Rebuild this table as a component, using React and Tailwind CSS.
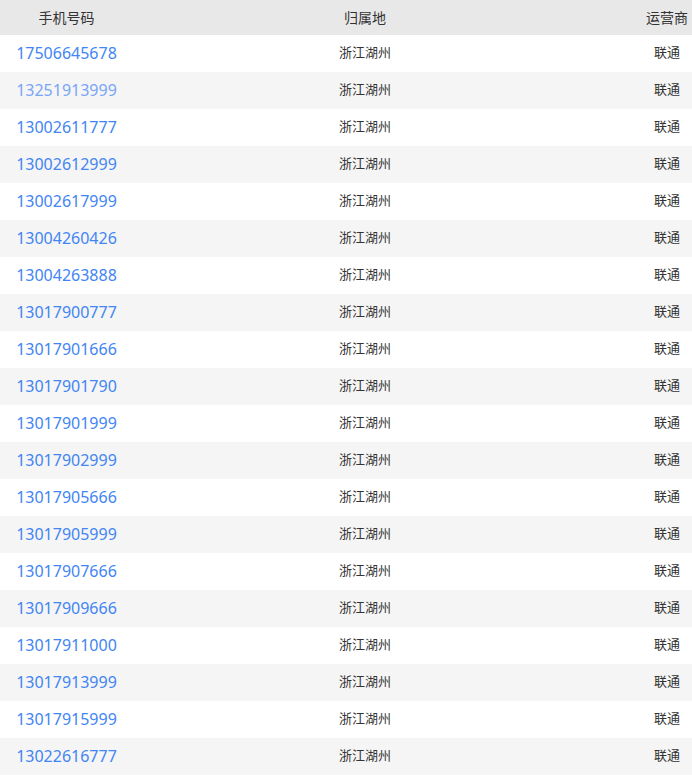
const rows = [
  "17506645678",
  "13251913999",
  "13002611777",
  "13002612999",
  "13002617999",
  "13004260426",
  "13004263888",
  "13017900777",
  "13017901666",
  "13017901790",
  "13017901999",
  "13017902999",
  "13017905666",
  "13017905999",
  "13017907666",
  "13017909666",
  "13017911000",
  "13017913999",
  "13017915999",
  "13022616777",
];

export default function App() {
  return (
    <div className="w-[692px] overflow-hidden bg-white font-['Noto_Sans','Noto_Sans_CJK_SC',sans-serif] text-[#333]">
      <div className="w-[737px]">
        {/* header */}
        <div className="grid h-[35px] grid-cols-[133px_464px_140px] items-center bg-[#e8e8e8] pb-[1px] text-[14px]">
          <div className="text-center">手机号码</div>
          <div className="text-center">归属地</div>
          <div className="text-center">运营商</div>
        </div>

        {rows.map((num, i) => (
          <div
            key={num}
            className={
              i % 2 === 1
                ? "grid h-[37px] grid-cols-[133px_464px_140px] items-center bg-[#f5f5f5] pb-[2px]"
                : "grid h-[37px] grid-cols-[133px_464px_140px] items-center bg-white pb-[2px]"
            }
          >
            <div
              className={
                i === 1
                  ? "text-center text-[16px] text-[#79a5f8]"
                  : "text-center text-[16px] text-[#4285f4]"
              }
            >
              {num}
            </div>
            <div className="text-center text-[13px]">浙江湖州</div>
            <div className="text-center text-[13px]">联通</div>
          </div>
        ))}
      </div>
    </div>
  );
}
